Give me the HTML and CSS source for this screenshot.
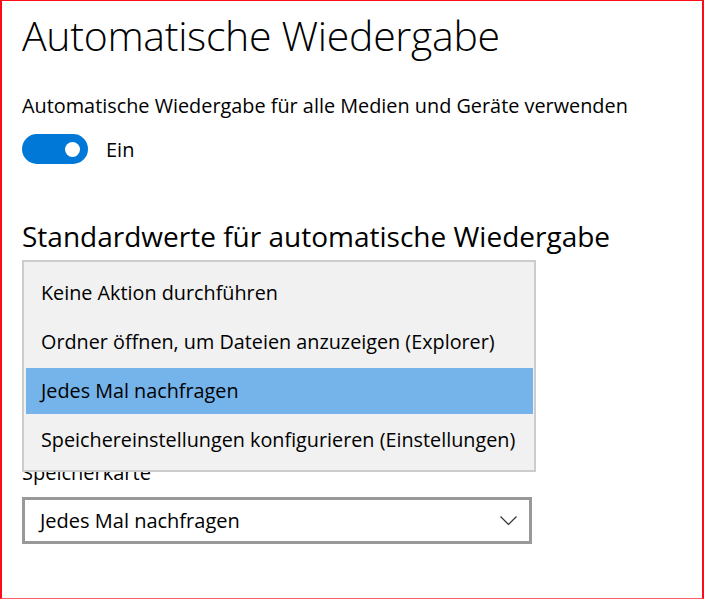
FILE: index.html
```html
<!DOCTYPE html>
<html lang="de">
<head>
<meta charset="utf-8">
<title>Automatische Wiedergabe</title>
<link rel="stylesheet" href="styles.css">
</head>
<body>
<div class="page">
  <h1 class="title">Automatische Wiedergabe</h1>
  <p class="setting-label">Automatische Wiedergabe für alle Medien und Geräte verwenden</p>
  <div class="toggle-row">
    <span class="toggle"><span class="knob"></span></span>
    <span class="toggle-text">Ein</span>
  </div>
  <h2 class="section">Standardwerte für automatische Wiedergabe</h2>
  <div class="field first covered">
    <div class="field-label">Wechseldatenträger</div>
    <div class="select">
      <span class="select-text">Jedes Mal nachfragen</span>
      <svg class="chevron" width="17" height="9" viewBox="0 0 17 9"><path d="M0.5 0.5 L8.5 8.5 L16.5 0.5" fill="none" stroke="#333" stroke-width="1.2"/></svg>
    </div>
  </div>
  <div class="field second">
    <div class="field-label">Speicherkarte</div>
    <div class="select">
      <span class="select-text">Jedes Mal nachfragen</span>
      <svg class="chevron" width="17" height="9" viewBox="0 0 17 9"><path d="M0.5 0.5 L8.5 8.5 L16.5 0.5" fill="none" stroke="#333" stroke-width="1.2"/></svg>
    </div>
  </div>
  <ul class="popup">
    <li class="item">Keine Aktion durchführen</li>
    <li class="item">Ordner öffnen, um Dateien anzuzeigen (Explorer)</li>
    <li class="item selected">Jedes Mal nachfragen</li>
    <li class="item">Speichereinstellungen konfigurieren (Einstellungen)</li>
  </ul>
</div>
</body>
</html>
```

FILE: styles.css
```css
html, body {
  margin: 0;
  padding: 0;
  background: #ffffff;
}

body {
  font-family: "Open Sans", "Noto Sans", "Liberation Sans", sans-serif;
  color: #000000;
}

.page {
  position: relative;
  box-sizing: border-box;
  width: 704px;
  height: 599px;
  border-top: 1px solid #ff0a1a;
  border-left: 2px solid #ff0a1a;
  border-right: 2px solid #ff0a1a;
  border-bottom: 1px solid #ff5a6a;
  padding-left: 20px;
  overflow: hidden;
}

.title {
  margin: 10px 0 0 0;
  font-size: 41px;
  font-weight: 300;
  line-height: 48px;
  letter-spacing: -0.3px;
}

.setting-label {
  margin: 33px 0 0 0;
  font-size: 19.85px;
  line-height: 28px;
}

.toggle-row {
  display: flex;
  align-items: center;
  margin-top: 14px;
  height: 30px;
}

.toggle {
  box-sizing: border-box;
  display: flex;
  align-items: center;
  justify-content: flex-end;
  width: 66px;
  height: 30px;
  border-radius: 15px;
  background: #0078d7;
  padding-right: 8px;
}

.knob {
  width: 15px;
  height: 15px;
  border-radius: 50%;
  background: #ffffff;
}

.toggle-text {
  margin-left: 18px;
  font-size: 20px;
  line-height: 28px;
  position: relative;
  top: 1px;
}

.section {
  margin: 54px 0 0 0;
  font-size: 28px;
  font-weight: 400;
  line-height: 36px;
}

.field-label {
  font-size: 20px;
  line-height: 28px;
}

.field.first {
  margin-top: 72px;
}

.field.covered {
  visibility: hidden;
}

.field.second {
  margin-top: 45px;
}

.field.second .select {
  margin-top: 10px;
}

.select {
  box-sizing: border-box;
  display: flex;
  align-items: center;
  justify-content: space-between;
  width: 510px;
  height: 47px;
  margin-top: 13px;
  border: 3px solid #999999;
  padding: 0 12px 0 15px;
  background: #ffffff;
}

.select-text {
  font-size: 20px;
  line-height: 28px;
}

.chevron {
  display: block;
}

.popup {
  position: absolute;
  left: 20px;
  top: 259px;
  box-sizing: border-box;
  width: 514px;
  margin: 0;
  padding: 8px 1px 7px 2px;
  list-style: none;
  background: #f1f1f1;
  border: 2px solid #cccccc;
}

.item {
  height: 46px;
  display: flex;
  align-items: center;
  padding-left: 15px;
  font-size: 19.8px;
  line-height: 28px;
}

.item + .item {
  margin-top: 3px;
}

.item.selected {
  background: #74b4ea;
}
```
